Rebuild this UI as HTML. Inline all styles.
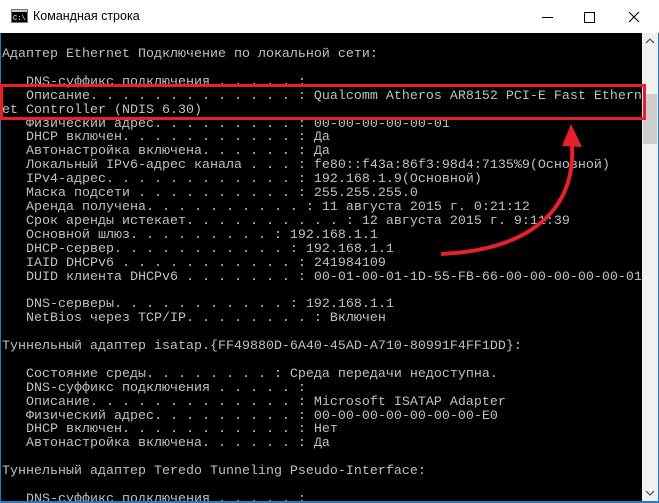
<!DOCTYPE html>
<html><head><meta charset="utf-8"><style>
html,body{margin:0;padding:0;}
body{width:659px;height:503px;position:relative;overflow:hidden;background:#fff;font-family:"Liberation Sans",sans-serif;}
#title{position:absolute;left:0;top:0;width:659px;height:33px;background:#fff;}
#title .t{position:absolute;left:33px;top:9px;font-size:12.5px;color:#000;}
#con{position:absolute;left:1px;top:33px;width:641px;height:468px;background:#000;overflow:hidden;}
pre{margin:0;padding:15px 0 0 1px;font-family:"Liberation Mono","DejaVu Sans Mono",monospace;font-size:13.33px;line-height:13.9px;color:#c0c0c0;white-space:pre;}
#sb{position:absolute;left:642px;top:33px;width:16px;height:468px;background:#f0f0f0;}
#thumb{position:absolute;left:643px;top:94px;width:14px;height:50px;background:#cdcdcd;}
#edge{position:absolute;left:0;top:33px;width:1px;height:470px;background:#2b79c2;}
#edge2{position:absolute;left:658px;top:33px;width:1px;height:470px;background:#2b79c2;}
#bot{position:absolute;left:0;top:501px;width:659px;height:2px;background:#2b79c2;}
</style></head><body>
<div id="title">
<svg style="position:absolute;left:11px;top:9px" width="17" height="14" viewBox="0 0 17 14"><rect x="0.5" y="0.5" width="16" height="13" fill="#000" stroke="#777"/><rect x="1" y="1" width="15" height="2" fill="#ccc"/><text x="2" y="11" font-size="7" fill="#fff" font-family="Liberation Mono">C:\</text></svg>
<div class="t">Командная строка</div>
<svg style="position:absolute;left:540px;top:10px" width="110" height="14" viewBox="0 0 110 14">
<line x1="2" y1="7.5" x2="13" y2="7.5" stroke="#000"/>
<rect x="44.5" y="2.5" width="10" height="10" fill="none" stroke="#000"/>
<path d="M89 2 L99 12 M99 2 L89 12" stroke="#000" stroke-width="1.1"/>
</svg>
</div>
<div id="con"><pre>Адаптер Ethernet Подключение по локальной сети:

   DNS-суффикс подключения . . . . . :
   Описание. . . . . . . . . . . . . : Qualcomm Atheros AR8152 PCI-E Fast Ethern
et Controller (NDIS 6.30)
   Физический адрес. . . . . . . . . : 00-00-00-00-00-01
   DHCP включен. . . . . . . . . . . : Да
   Автонастройка включена. . . . . . : Да
   Локальный IPv6-адрес канала . . . : fe80::f43a:86f3:98d4:7135%9(Основной)
   IPv4-адрес. . . . . . . . . . . . : 192.168.1.9(Основной)
   Маска подсети . . . . . . . . . . : 255.255.255.0
   Аренда получена. . . . . . . . . . : 11 августа 2015 г. 0:21:12
   Срок аренды истекает. . . . . . . . . . : 12 августа 2015 г. 9:11:39
   Основной шлюз. . . . . . . . . : 192.168.1.1
   DHCP-сервер. . . . . . . . . . . : 192.168.1.1
   IAID DHCPv6 . . . . . . . . . . . : 241984109
   DUID клиента DHCPv6 . . . . . . . : 00-01-00-01-1D-55-FB-66-00-00-00-00-00-01

   DNS-серверы. . . . . . . . . . . : 192.168.1.1
   NetBios через TCP/IP. . . . . . . . : Включен

Туннельный адаптер isatap.{FF49880D-6A40-45AD-A710-80991F4FF1DD}:

   Состояние среды. . . . . . . . : Среда передачи недоступна.
   DNS-суффикс подключения . . . . . :
   Описание. . . . . . . . . . . . . : Microsoft ISATAP Adapter
   Физический адрес. . . . . . . . . : 00-00-00-00-00-00-00-E0
   DHCP включен. . . . . . . . . . . : Нет
   Автонастройка включена. . . . . . : Да

Туннельный адаптер Teredo Tunneling Pseudo-Interface:

   DNS-суффикс подключения . . . . . :
</pre></div>
<div id="sb"></div>
<div id="thumb"></div>
<svg style="position:absolute;left:643px;top:36px" width="14" height="10"><path d="M3 7 L7 3 L11 7" stroke="#606060" fill="none" stroke-width="1.3"/></svg>
<svg style="position:absolute;left:643px;top:488px" width="14" height="10"><path d="M3 3 L7 7 L11 3" stroke="#606060" fill="none" stroke-width="1.3"/></svg>
<div id="edge"></div><div id="edge2"></div><div id="bot"></div>
<svg style="position:absolute;left:0;top:0" width="659" height="503">
<rect x="1.5" y="85.5" width="643" height="33" fill="none" stroke="#e8202a" stroke-width="3"/>
<path d="M441 254 C 530 250, 576 210, 572 144" stroke="#e8202a" stroke-width="4" fill="none"/>
<path d="M571 124 L582 147 L562 146 Z" fill="#e8202a"/>
</svg>
</body></html>
